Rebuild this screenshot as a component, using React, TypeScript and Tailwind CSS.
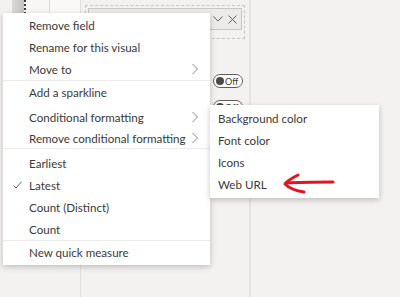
import React from "react";

const font = { fontFamily: 'Lato, "Open Sans", Arial, sans-serif' };

function Chevron() {
  return (
    <svg width="8" height="12" viewBox="0 0 8 12" className="absolute right-[11px] top-1/2 -translate-y-1/2">
      <path d="M1.5 1 L6.5 6 L1.5 11" fill="none" stroke="#8a8886" strokeWidth="1" />
    </svg>
  );
}

function Item({ label, h = 22, chevron = false, check = false }: { label: string; h?: number; chevron?: boolean; check?: boolean }) {
  return (
    <div className="relative flex items-center pl-[26px] pt-[1px] text-[11.6px] text-[#3b3a39]" style={{ height: h }}>
      {check && (
        <svg width="9" height="8" viewBox="0 0 9 8" className="absolute left-[10px] top-1/2 -translate-y-1/2">
          <path d="M0.5 4.5 L3 7 L8.5 0.8" fill="none" stroke="#605e5c" strokeWidth="1" />
        </svg>
      )}
      <span className="whitespace-nowrap">{label}</span>
      {chevron && <Chevron />}
    </div>
  );
}

function Sep() {
  return <div className="h-px bg-[#edebe9]" />;
}

function Toggle() {
  return (
    <div className="flex h-[14px] w-[30px] items-center gap-[1px] rounded-full border border-[#605e5c] bg-white pl-[2px]">
      <div className="h-[8px] w-[8px] rounded-full bg-[#4a4a4a]" />
      <span className="text-[9px] leading-none text-[#3b3a39]" style={font}>Off</span>
    </div>
  );
}

export default function App() {
  return (
    <div className="relative h-[297px] w-[400px] overflow-hidden bg-[#f3f2f1]" style={font}>
      <div className="flex h-full">
        {/* left strip */}
        <div className="flex h-full w-[80px] flex-col">
          <div className="flex h-[16px]">
            <div className="h-full w-[12px] bg-[#f3f2f1]" />
            <div className="h-full w-[12px] bg-gradient-to-r from-[#dcdad8] to-[#c4c2c0]" />
            <div className="h-full w-[2px] bg-[repeating-linear-gradient(to_bottom,#3b3a39_0px,#3b3a39_2px,transparent_2px,transparent_4px)]" />
            <div className="h-full w-[23px] bg-[#f8f7f6]" />
            <div className="h-full w-px bg-[#dddbd9]" />
            <div className="h-full w-[30px] bg-[#faf9f8]" />
          </div>
          <div className="flex-1 bg-[#f3f2f1]" />
        </div>
        <div className="h-full w-px bg-[#e1dfdd]" />
        {/* panel */}
        <div className="flex h-full w-[168px] flex-col bg-[#f3f2f1] pl-[4px] pr-[4px] pt-[5px]">
          <div className="h-[34px] w-[160px] border border-dashed border-[#c8c6c4] p-[2px]">
            <div className="flex h-[22px] items-center justify-end gap-[5px] border border-[#c8c6c4] bg-[#edebe9] pr-[4px]">
              <svg width="10" height="6" viewBox="0 0 10 6">
                <path d="M0.5 0.5 L5 5 L9.5 0.5" fill="none" stroke="#605e5c" strokeWidth="1" />
              </svg>
              <svg width="9" height="9" viewBox="0 0 9 9">
                <path d="M0.5 0.5 L8.5 8.5 M8.5 0.5 L0.5 8.5" fill="none" stroke="#605e5c" strokeWidth="1" />
              </svg>
            </div>
          </div>
          <div className="flex flex-col items-end pr-[2px] pt-[35px]">
            <Toggle />
            <div className="mt-[12px]">
              <Toggle />
            </div>
          </div>
        </div>
        <div className="h-full w-[2px] bg-[#e6e4e2]" />
        <div className="h-full flex-1 bg-[#f3f2f1]" />
      </div>

      {/* context menu */}
      <div className="absolute left-[3px] top-[13px] w-[207px] bg-white pt-[1px] shadow-[0_2px_6px_rgba(0,0,0,0.22)]">
        <Item label="Remove field" />
        <Item label="Rename for this visual" />
        <Item label="Move to" chevron />
        <Sep />
        <Item label="Add a sparkline" />
        <div className="h-[3px]" />
        <Item label="Conditional formatting" chevron />
        <Item label="Remove conditional formatting" chevron h={20} />
        <Sep />
        <div className="h-[3px]" />
        <Item label="Earliest" />
        <Item label="Latest" check />
        <Item label="Count (Distinct)" />
        <Item label="Count" />
        <Sep />
        <Item label="New quick measure" h={23} />
        <div className="h-px" />
      </div>

      {/* submenu */}
      <div className="absolute left-[210px] top-[105px] w-[169px] bg-white pb-[3px] pt-[2px] shadow-[0_2px_6px_rgba(0,0,0,0.22)]">
        {["Background color", "Font color", "Icons", "Web URL"].map((l) => (
          <div key={l} className="flex h-[22px] items-center pl-[8px] pt-[1px] text-[11.6px] text-[#3b3a39]">
            {l}
          </div>
        ))}
      </div>

      {/* red arrow annotation */}
      <svg className="absolute left-0 top-0" width="400" height="297" viewBox="0 0 400 297">
        <path d="M286 183 C300 182 318 182 333 182" fill="none" stroke="#e3141b" strokeWidth="3" strokeLinecap="round" />
        <path d="M298 175 C292 178 287 181 285 184 C290 189 297 191 304 192" fill="none" stroke="#e3141b" strokeWidth="3" strokeLinecap="round" strokeLinejoin="round" />
      </svg>
    </div>
  );
}
